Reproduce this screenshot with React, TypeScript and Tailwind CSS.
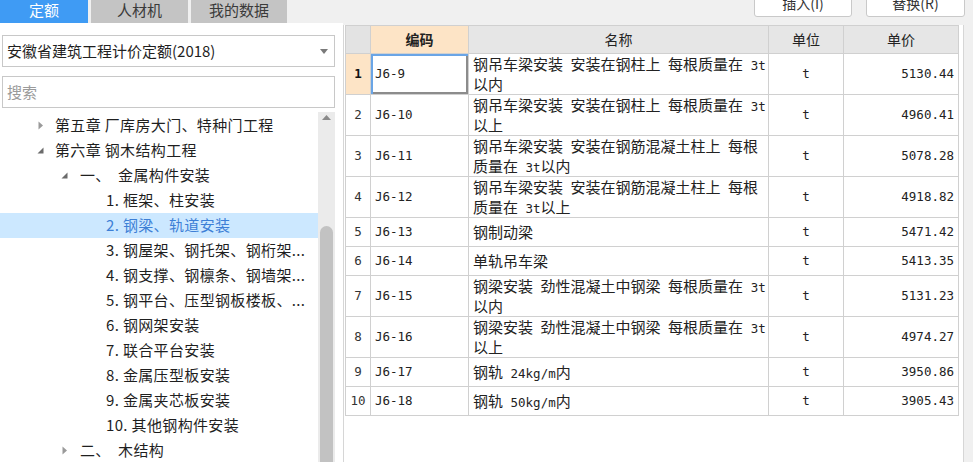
import React from "react";

type Row = {
  no: number;
  code: string;
  name: string[];
  unit: string;
  price: string;
};

const rows: Row[] = [
  { no: 1, code: "J6-9", name: ["钢吊车梁安装 安装在钢柱上 每根质量在 3t", "以内"], unit: "t", price: "5130.44" },
  { no: 2, code: "J6-10", name: ["钢吊车梁安装 安装在钢柱上 每根质量在 3t", "以上"], unit: "t", price: "4960.41" },
  { no: 3, code: "J6-11", name: ["钢吊车梁安装 安装在钢筋混凝土柱上 每根", "质量在 3t以内"], unit: "t", price: "5078.28" },
  { no: 4, code: "J6-12", name: ["钢吊车梁安装 安装在钢筋混凝土柱上 每根", "质量在 3t以上"], unit: "t", price: "4918.82" },
  { no: 5, code: "J6-13", name: ["钢制动梁"], unit: "t", price: "5471.42" },
  { no: 6, code: "J6-14", name: ["单轨吊车梁"], unit: "t", price: "5413.35" },
  { no: 7, code: "J6-15", name: ["钢梁安装 劲性混凝土中钢梁 每根质量在 3t", "以内"], unit: "t", price: "5131.23" },
  { no: 8, code: "J6-16", name: ["钢梁安装 劲性混凝土中钢梁 每根质量在 3t", "以上"], unit: "t", price: "4974.27" },
  { no: 9, code: "J6-17", name: ["钢轨 24kg/m内"], unit: "t", price: "3950.86" },
  { no: 10, code: "J6-18", name: ["钢轨 50kg/m内"], unit: "t", price: "3905.43" },
];

// ascii runs get the half-width mono face, like the old SimSun grid
function Mixed({ text }: { text: string }) {
  const parts = text.split(/([\x20-\x7e]+)/);
  return (
    <>
      {parts.map((p, i) =>
        /^[\x20-\x7e]+$/.test(p) ? (
          <span key={i} className="font-['DejaVu_Sans_Mono',monospace] text-[12.5px] leading-[20px] whitespace-pre">
            {p}
          </span>
        ) : (
          <span key={i} className="leading-[20px]">{p}</span>
        )
      )}
    </>
  );
}

const Collapsed = () => (
  <svg width="6" height="9" viewBox="0 0 6 9">
    <path d="M0.5 0.5 L5 4.5 L0.5 8.5 Z" fill="#9a9a9a" />
  </svg>
);

const Expanded = () => (
  <svg width="7" height="7" viewBox="0 0 7 7">
    <path d="M6.5 0.5 L6.5 6.5 L0.5 6.5 Z" fill="#6b6b6b" />
  </svg>
);

type TreeItem = {
  label: string;
  level: number;
  icon?: "open" | "closed";
  selected?: boolean;
};

const tree: TreeItem[] = [
  { label: "第五章 厂库房大门、特种门工程", level: 1, icon: "closed" },
  { label: "第六章 钢木结构工程", level: 1, icon: "open" },
  { label: "一、  金属构件安装", level: 2, icon: "open" },
  { label: "1. 框架、柱安装", level: 3 },
  { label: "2. 钢梁、轨道安装", level: 3, selected: true },
  { label: "3. 钢屋架、钢托架、钢桁架...", level: 3 },
  { label: "4. 钢支撑、钢檩条、钢墙架...", level: 3 },
  { label: "5. 钢平台、压型钢板楼板、...", level: 3 },
  { label: "6. 钢网架安装", level: 3 },
  { label: "7. 联合平台安装", level: 3 },
  { label: "8. 金属压型板安装", level: 3 },
  { label: "9. 金属夹芯板安装", level: 3 },
  { label: "10. 其他钢构件安装", level: 3 },
  { label: "二、  木结构", level: 2, icon: "closed" },
];

function TreeRow({ item }: { item: TreeItem }) {
  const iconLeft = item.level === 1 ? "pl-[37px]" : "pl-[61px]";
  return (
    <div
      className={`h-[25px] flex items-center whitespace-pre text-[15px] tracking-[0.35px] ${
        item.selected ? "bg-[#cce8ff] text-[#3d7fd6]" : "text-[#1f1f1f]"
      }`}
    >
      {item.level === 3 ? (
        <span className="pl-[106px]">{item.label}</span>
      ) : (
        <>
          <span className={`${iconLeft} flex items-center`}>
            <span className="w-[7px] flex justify-center">
              {item.icon === "open" ? <Expanded /> : <Collapsed />}
            </span>
          </span>
          <span className={item.level === 1 ? "pl-[11px]" : "pl-[12px]"}>{item.label}</span>
        </>
      )}
    </div>
  );
}

export default function App() {
  return (
    <div className="w-[973px] h-[462px] overflow-hidden bg-[#f0f0f0] flex flex-col font-['Noto_Sans_CJK_SC',sans-serif] text-[#222]">
      {/* tabs + action buttons */}
      <div className="h-[23px] flex justify-between flex-none">
        <div className="flex gap-[3px]">
          <div className="w-[88px] h-[23px] pt-[1px] bg-[#3f9bf4] text-white text-[15px] leading-[17px] text-center">定额</div>
          <div className="w-[97px] h-[23px] pt-[1px] bg-[#c4c4c4] text-[#3a3a3a] text-[15px] leading-[17px] text-center">人材机</div>
          <div className="w-[96px] h-[23px] pt-[1px] bg-[#c4c4c4] text-[#3a3a3a] text-[15px] leading-[17px] text-center">我的数据</div>
        </div>
        <div className="flex gap-[14px] mr-[8px]">
          <button className="w-[98px] h-[28px] -mt-[11px] bg-white border border-[#c9c9c9] rounded-[3px] text-[14px] leading-[16px] text-[#333]">插入(I)</button>
          <button className="w-[99px] h-[28px] -mt-[11px] bg-white border border-[#c9c9c9] rounded-[3px] text-[14px] leading-[16px] text-[#333]">替换(R)</button>
        </div>
      </div>

      <div className="flex flex-1 min-h-0">
        {/* left: quota library tree */}
        <div className="w-[343px] bg-white flex flex-col flex-none">
          <div className="mt-[12px] mx-[2px] w-[333px] h-[32px] border border-[#c8c8c8] flex items-center justify-between pl-[4px] pr-[6px]">
            <span className="text-[15px] text-[#1f1f1f]">安徽省建筑工程计价定额(2018)</span>
            <svg width="8" height="5" viewBox="0 0 8 5">
              <path d="M0 0 L8 0 L4 5 Z" fill="#7a7a7a" />
            </svg>
          </div>
          <div className="mt-[9px] mx-[2px] w-[333px] h-[32px] border border-[#c8c8c8] flex items-center pl-[4px]">
            <span className="text-[15px] text-[#9a9a9a]">搜索</span>
          </div>
          <div className="mt-[4px] flex flex-1 min-h-0">
            <div className="w-[318px] pt-[1px]">
              {tree.map((t, i) => (
                <TreeRow key={i} item={t} />
              ))}
            </div>
            <div className="w-[17px] bg-[#ebebeb] flex flex-col items-center">
              <svg width="9" height="5" viewBox="0 0 9 5" className="mt-[3px]">
                <path d="M0 5 L4.5 0 L9 5 Z" fill="#8a8a8a" />
              </svg>
              <div className="mt-[106px] w-[13px] flex-1 bg-[#c2c2c2] rounded-t-[7px]" />
            </div>
          </div>
        </div>

        {/* right: quota table */}
        <div className="w-[621px] mt-[2px] bg-white border-l border-r border-[#d6d6d6] flex-none">
          <table className="ml-[1px] border-collapse table-fixed w-[613px] text-[15px]">
            <colgroup>
              <col className="w-[25px]" />
              <col className="w-[98px]" />
              <col className="w-[300px]" />
              <col className="w-[75px]" />
              <col className="w-[115px]" />
            </colgroup>
            <thead>
              <tr className="h-[28px]">
                <th className="border border-[#d0d0d0] bg-[#e3e3e3]" />
                <th className="border border-[#d0d0d0] bg-[#fde4c6] text-[14px] font-bold text-[#222]">编码</th>
                <th className="border border-[#d0d0d0] bg-[#e6e6e6] text-[14px] font-normal">名称</th>
                <th className="border border-[#d0d0d0] bg-[#e6e6e6] text-[14px] font-normal">单位</th>
                <th className="border border-[#d0d0d0] bg-[#e6e6e6] text-[14px] font-normal">单价</th>
              </tr>
            </thead>
            <tbody>
              {rows.map((r) => {
                const tall = r.name.length > 1;
                const h = tall ? "h-[41px]" : "h-[29px]";
                const first = r.no === 1;
                return (
                  <tr key={r.no} className={h}>
                    <td
                      className={`border border-[#d0d0d0] p-0 text-center font-['DejaVu_Sans_Mono',monospace] text-[12.5px] leading-[16px] ${
                        first ? "bg-[#fde4c6] font-bold text-[#111]" : "text-[#333]"
                      }`}
                    >
                      {r.no}
                    </td>
                    <td className="border border-[#d0d0d0] p-0">
                      <div
                        className={`${tall ? "h-[40px]" : "h-[28px]"} flex items-center pl-[4px] font-['DejaVu_Sans_Mono',monospace] text-[12.5px] leading-[16px] ${
                          first ? "shadow-[inset_2px_2px_0_#6aa5e6,inset_-2px_-2px_0_#8c8c8c]" : ""
                        }`}
                      >
                        {r.code}
                      </div>
                    </td>
                    <td className="border border-[#d0d0d0] px-[4px] py-0 align-middle leading-[20px] whitespace-nowrap">
                      {r.name.map((line, i) => (
                        <div key={i} className="h-[20px] leading-[20px] overflow-visible">
                          <Mixed text={line} />
                        </div>
                      ))}
                    </td>
                    <td className="border border-[#d0d0d0] p-0 text-center font-['DejaVu_Sans_Mono',monospace] text-[12.5px] leading-[16px]">
                      {r.unit}
                    </td>
                    <td className="border border-[#d0d0d0] p-0 pr-[4px] text-right font-['DejaVu_Sans_Mono',monospace] text-[12.5px] leading-[16px]">
                      {r.price}
                    </td>
                  </tr>
                );
              })}
            </tbody>
          </table>
        </div>
      </div>
    </div>
  );
}
